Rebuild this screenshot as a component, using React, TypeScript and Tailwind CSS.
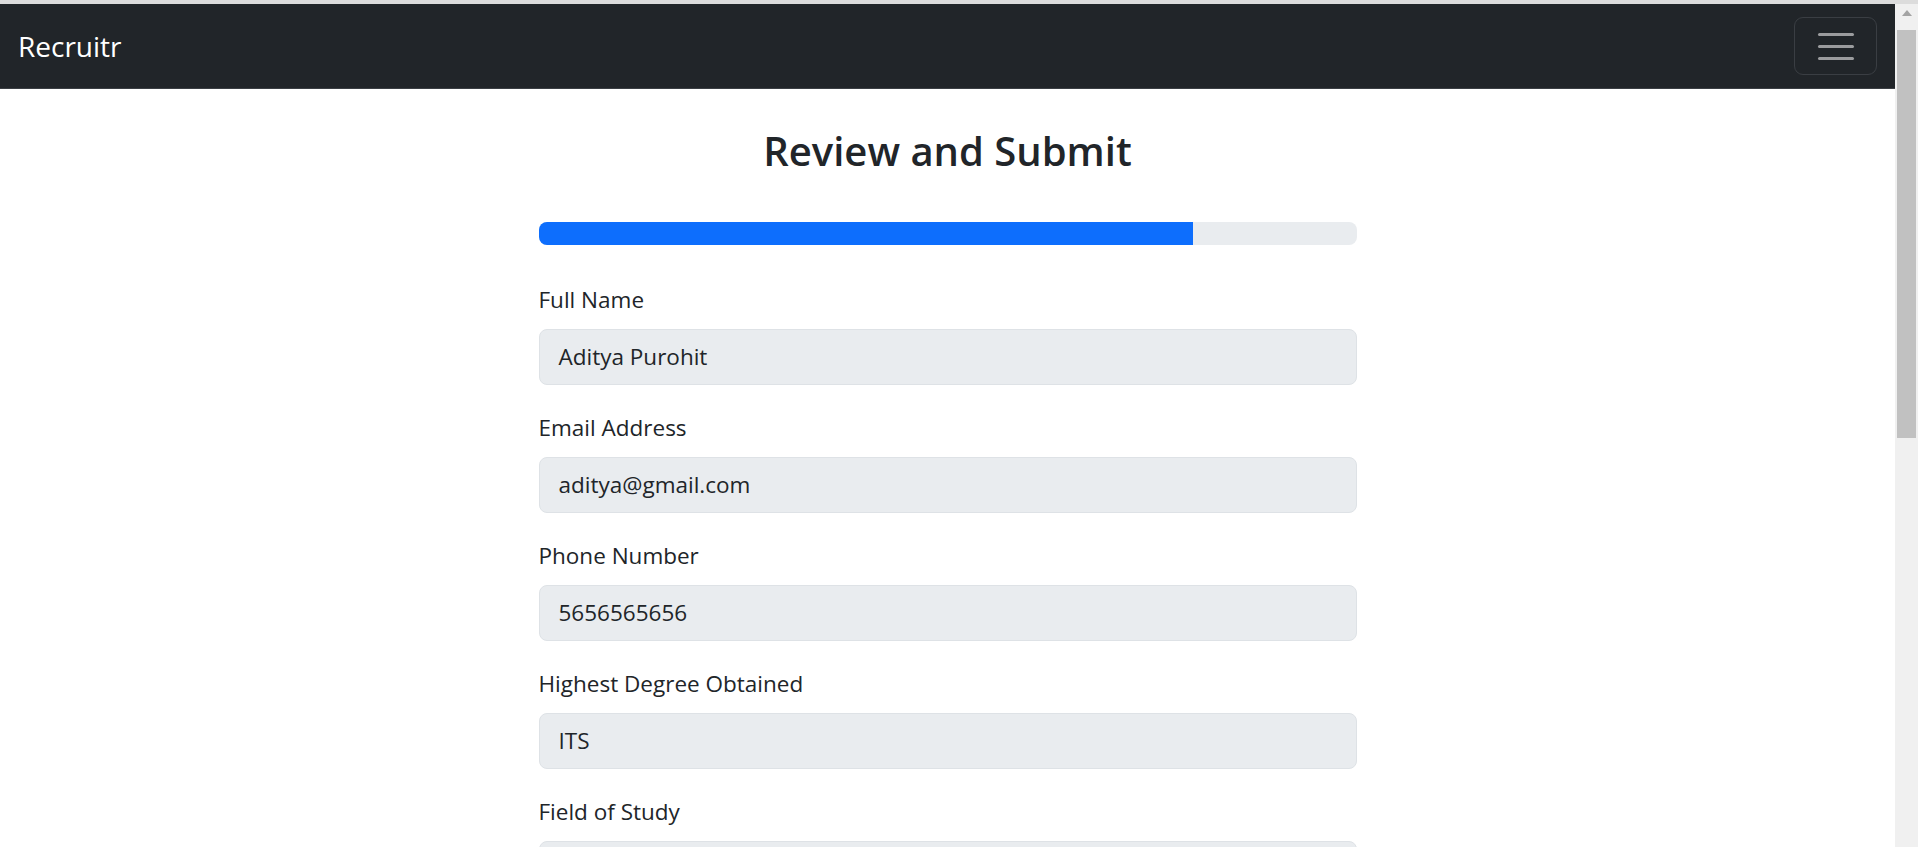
import React from "react";

const fields = [
  { label: "Full Name", value: "Aditya Purohit" },
  { label: "Email Address", value: "aditya@gmail.com" },
  { label: "Phone Number", value: "5656565656" },
  { label: "Highest Degree Obtained", value: "ITS" },
  { label: "Field of Study", value: "" },
];

const Navbar: React.FC = () => (
  <nav className="flex h-[85px] shrink-0 items-center justify-between border-b border-[#3b3f44] bg-[#212529] pl-[18px] pr-[18px]">
    <span className="text-[28px] leading-none text-white">Recruitr</span>
    <button className="flex h-[58px] w-[83px] flex-col items-center justify-center gap-[9px] rounded-[9px] border border-[#3a3e43]">
      <span className="h-[3px] w-[36px] rounded-full bg-[#9b9c9e]" />
      <span className="h-[3px] w-[36px] rounded-full bg-[#9b9c9e]" />
      <span className="h-[3px] w-[36px] rounded-full bg-[#9b9c9e]" />
    </button>
  </nav>
);

const Scrollbar: React.FC = () => (
  <div className="flex w-[23px] shrink-0 flex-col items-center bg-[#f0f0f0]">
    <div className="flex h-[18px] w-full items-center justify-center">
      <svg width="10" height="6" viewBox="0 0 10 6">
        <polygon points="5,0 10,6 0,6" fill="#a3a3a3" />
      </svg>
    </div>
    <div className="mt-[8px] h-[408px] w-[19px] bg-[#c1c1c1]" />
  </div>
);

export default function App() {
  return (
    <div className="flex h-[847px] flex-col overflow-hidden bg-white text-[#212529]" style={{ fontFamily: '"Open Sans", "Noto Sans", sans-serif' }}>
      <div className="h-[4px] shrink-0 bg-[#dcdcdc]" />
      <div className="flex min-h-0 flex-1">
        <div className="flex min-w-0 flex-1 flex-col overflow-hidden">
          <Navbar />
          <main className="mx-auto flex w-[818px] shrink-0 flex-col pt-[38px]">
            <h2 className="text-center text-[40px] font-semibold leading-[48px]">Review and Submit</h2>
            <div className="mt-[47px] h-[23px] w-full overflow-hidden rounded-[8px] bg-[#e9ecef]">
              <div className="h-full w-[80%] bg-[#0d6efd]" />
            </div>
            <div className="mt-[40px] flex flex-col gap-[28px]">
              {fields.map((f) => (
                <div key={f.label} className="flex flex-col">
                  <label className="mb-[14px] text-[22.5px] leading-[30px]">{f.label}</label>
                  <div className="flex h-[56px] items-center rounded-[8px] border border-[#dee2e6] bg-[#e9ecef] px-[19px] text-[22.5px]">
                    {f.value}
                  </div>
                </div>
              ))}
            </div>
          </main>
        </div>
        <Scrollbar />
      </div>
    </div>
  );
}
